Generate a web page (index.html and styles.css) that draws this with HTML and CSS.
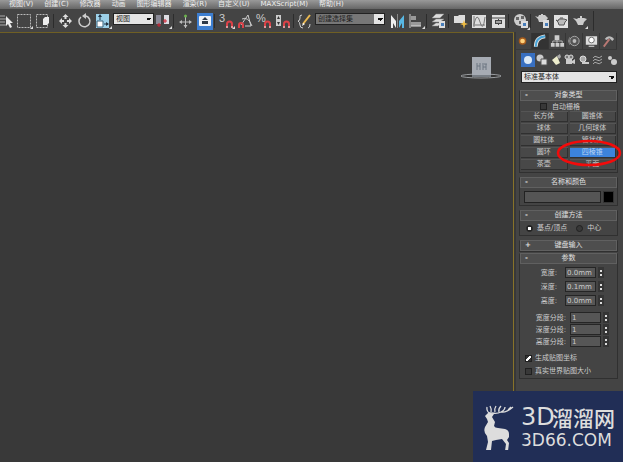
FILE: index.html
```html
<!DOCTYPE html>
<html lang="zh-CN">
<head>
<meta charset="utf-8">
<title>3D 建模</title>
<link rel="stylesheet" href="styles.css">
</head>
<body>
<nav class="menubar">
  <button>视图(V)</button><button>创建(C)</button><button>修改器</button><button>动画</button><button>图形编辑器</button><button>渲染(R)</button><button>自定义(U)</button><button>MAXScript(M)</button><button>帮助(H)</button>
</nav>
<div class="toolbar">
  <button class="tool first" aria-label="按名称选择"><svg viewBox="0 0 15 20"><path d="M0 5h5M0 8h6M0 11h5M0 14h6" stroke="#aaa"/><path d="M6 5v10l2-2 2 4 2-1-2-4h3z" fill="#eee"/></svg></button>
  <button class="tool" aria-label="矩形选择"><svg viewBox="0 0 19 20"><rect x="2.500" y="3.500" width="13" height="13" fill="none" stroke="#bbb" stroke-dasharray="2 1"/><path d="M18 15v3h-3z" fill="#ddd"/></svg></button>
  <button class="tool" aria-label="窗口选择"><svg viewBox="0 0 19 20"><rect x="2.500" y="3.500" width="11" height="13" fill="none" stroke="#bbb" stroke-dasharray="2 1"/><path d="M9 8l2-2h4v6l-2 2H9z" fill="#eee"/></svg></button>
  <span class="sep"></span>
  <button class="tool" aria-label="移动"><svg viewBox="0 0 19 20"><path d="M9.500 5v3M9.500 12v3M4 10h4M11 10h4" stroke="#ddd" stroke-width="2"/><path d="M9.500 3l3 3h-6zM9.500 17l3-3h-6zM3 10l3-3v6zM16 10l-3-3v6z" fill="#ddd"/></svg></button>
  <button class="tool" aria-label="旋转"><svg viewBox="0 0 19 20"><path d="M6 6a5.500 5.500 0 1 0 5-1" fill="none" stroke="#ccc" stroke-width="1.500"/><path d="M11 2v6L7 5z" fill="#ccc"/></svg></button>
  <button class="tool" aria-label="缩放"><svg viewBox="0 0 19 20"><path d="M2 3h13v14H2z" fill="#9cd0e8"/><path d="M3 10h6v6H3z" fill="#fff" stroke="#38607a"/><path d="M6 9V5M10 13h4" stroke="#234"/><path d="M6 3l2 3H4zM15 13l-3-2v4z" fill="#234"/><path d="M18 15v3h-3z" fill="#ddd"/></svg></button>
  <select class="combo coord" aria-label="参考坐标系"><option>视图</option></select>
  <button class="tool" aria-label="轴点中心"><svg viewBox="0 0 19 20"><path d="M2 4h5v9H2z" fill="#898996"/><path d="M10 4h5v9h-5z" fill="#dcdce2"/><path d="M3 14h4M5 12v4M9 10h4M11 8v4" stroke="#d02535"/><path d="M18 15v3h-3z" fill="#ddd"/></svg></button>
  <span class="sep"></span>
  <button class="tool" aria-label="操纵"><svg viewBox="0 0 19 20"><path d="M9.500 5v12M4 11h11" stroke="#bbb"/><path d="M3 11l3-2v4zM16 11l-3-2v4zM9.500 17l2-3h-4z" fill="#bbb"/><circle cx="9.500" cy="5" r="1.500" fill="#6db34e"/></svg></button>
  <button class="tool" aria-label="快捷键覆盖" aria-pressed="true"><svg viewBox="0 0 19 20"><path d="M2 2h16v17H2z" fill="#3d7ed0"/><rect x="4" y="5" width="12" height="10" rx="1" fill="#f0f3f7"/><path d="M10 6l3 3H7zM7 10h6v3H7z" fill="#2e3a49"/></svg></button>
  <span class="sep"></span>
  <button class="tool" aria-label="捕捉"><svg viewBox="0 0 19 20"><text x="2" y="11" class="glyph">3</text><path d="M10 17v-4a2.500 2.500 0 0 1 5 0v4" class="magnet"/><path d="M9 16h2M14 16h2" stroke="#eee"/><path d="M18 15v3h-3z" fill="#ddd"/></svg></button>
  <button class="tool" aria-label="角度捕捉"><svg viewBox="0 0 19 20"><path d="M5 14L12 4l3 11H9M6 8q6-3 10 7" fill="none" stroke="#ccc"/><path d="M3 17v-3a2 2 0 0 1 4 0v3" class="magnet"/></svg></button>
  <button class="tool" aria-label="百分比捕捉"><svg viewBox="0 0 19 20"><text x="1" y="11" class="glyph">%</text><path d="M10 17v-4a2.500 2.500 0 0 1 5 0v4" class="magnet"/><path d="M9 16h2M14 16h2" stroke="#eee"/></svg></button>
  <button class="tool" aria-label="微调器捕捉"><svg viewBox="0 0 19 20"><path d="M2 4h5v11H2z" fill="#ccc"/><path d="M4.500 5L6 8H3zM4.500 14L6 11H3z" fill="#333"/><path d="M10 17v-4a2.500 2.500 0 0 1 5 0v4" class="magnet"/><path d="M9 16h2M14 16h2" stroke="#eee"/></svg></button>
  <span class="sep"></span>
  <button class="tool" aria-label="编辑选择集"><svg viewBox="0 0 19 20"><path d="M6 4q-3 0-2 3 0 3-2 3 2 1 2 4 0 3 3 3M12 17q2 0 2-4" fill="none" stroke="#ccc"/><path d="M7 13l7-9" stroke="#ebb951" stroke-width="2"/><path d="M6 15l1-3 2 1z" fill="#fff"/></svg></button>
  <select class="combo sets" aria-label="命名选择集"><option>创建选择集</option></select>
  <span class="sep plain"></span>
  <button class="tool" aria-label="镜像"><svg viewBox="0 0 19 20"><path d="M3 4l5 6v7l-3-5v5H3z" fill="#eee"/><path d="M9.500 3v14" stroke="#888"/><path d="M16 4l-5 6v7l3-5v5h2z" fill="#58b7e3"/></svg></button>
  <button class="tool" aria-label="对齐"><svg viewBox="0 0 19 20"><path d="M3 3v14" stroke="#ccc"/><path d="M4 5h5v4H4zM4 11h10v4H4z" fill="#999"/><path d="M4 15h10" stroke="#ddd"/><path d="M18 15v3h-3z" fill="#ddd"/></svg></button>
  <span class="sep"></span>
  <button class="tool" aria-label="图层"><svg viewBox="0 0 19 20"><path d="M3 7l4-4h8l-4 4zM3 11l4-3h8l-4 3zM3 15l4-3h5l-3 3z" fill="#ddd" stroke="#888" stroke-width=".5"/><path d="M10 10h6v7h-6z" fill="#ddd"/><path d="M12 12h3v3h-3z" fill="#477ebc"/></svg></button>
  <span class="sep"></span>
  <button class="tool" aria-label="功能区"><svg viewBox="0 0 19 20"><path d="M3 5h4l1-1h6v8H3z" fill="#ddd"/><path d="M13 9l1 3 3 1-3 1-1 4-1-4-3-1 3-1z" fill="#f0bd43"/></svg></button>
  <button class="tool" aria-label="曲线编辑器"><svg viewBox="0 0 19 20"><path d="M2 4h14v13H2z" fill="#dedede"/><path d="M4 5v11M3 14h12M4 13q3-13 6-2t5-5" fill="none" stroke="#777"/></svg></button>
  <button class="tool" aria-label="图解视图"><svg viewBox="0 0 19 20"><path d="M3 4h13v13H3z" fill="#dedede"/><path d="M3 7h13M9.500 8v6" stroke="#444"/><path d="M6 9h7v4H6z" fill="#444"/><path d="M7 11h5" stroke="#fff"/></svg></button>
  <span class="sep"></span>
  <button class="tool" aria-label="材质编辑器"><svg viewBox="0 0 19 20"><circle cx="9" cy="9" r="6" fill="#ccc"/><path d="M5 6h3v3H5zM10 5h3v3h-3zM8 10h3v3H8z" fill="#666"/><path d="M10 10h7v7h-7z" fill="#ddd"/><path d="M12 12h3v3h-3z" fill="#477ebc"/><path d="M19 16v3h-3z" fill="#ddd"/></svg></button>
  <span class="sep"></span>
  <button class="tool" aria-label="渲染设置"><svg viewBox="0 0 19 20"><path d="M2 5l3 1 1-2h2V3h2v1h2l3 3-3 4H6L5 8z" fill="#ccc"/><path d="M10 9h6v8h-6z" fill="#ddd"/><path d="M12 12h3v3h-3z" fill="#477ebc"/></svg></button>
  <button class="tool" aria-label="渲染帧窗口"><svg viewBox="0 0 19 20"><path d="M2 4h14v13H2z" fill="#e2e2e2"/><path d="M4 9l2 1 1-2h5l3 1-2 2-1 3H7l-1-3zM8 7h3" fill="#bbb" stroke="#555"/></svg></button>
  <button class="tool" aria-label="渲染产品"><svg viewBox="0 0 19 20"><path d="M2 7l4 1 1-1h2V5h2v2h2l3 1-3 3-1 3H7l-2-4z" fill="#ccc"/><path d="M17 15v3h-3z" fill="#ddd"/></svg></button>
  <span class="sep last"></span>
</div>
<main class="work">
  <section class="viewport" aria-label="视口">
    <svg class="cube" viewBox="0 0 44 26"><ellipse cx="21" cy="19" rx="20" ry="2" fill="#333" stroke="#9a9da0"/><path d="M12 0h19v18H12z" fill="#a6abb3"/><path d="M12 18h19v2H12z" fill="#777d84"/><path d="M17 6v7M17 9h3M20 6v7M22 7h5M23 13V8M26 7v6M23 10h3" stroke="#6d7682"/></svg>
  </section>
  <aside class="panel">
    <div class="tabs">
      <button aria-label="创建"><svg viewBox="0 0 17 16"><circle cx="8" cy="8" r="4" fill="#a75c1d"/><circle cx="8" cy="8" r="2.500" fill="#ffd17b"/></svg></button>
      <button aria-label="修改" class="on"><svg viewBox="0 0 17 16"><path d="M4 14Q4 4 14 3" fill="none" stroke="#ddd" stroke-width="4"/><path d="M4 14Q4 4 14 3" fill="none" stroke="#47a4d8" stroke-width="2"/></svg></button>
      <button aria-label="层次"><svg viewBox="0 0 17 16"><path d="M6 2h5v5H6zM2 10h4v4H2zM7 10h4v4H7zM12 10h4v4h-4z" fill="#ccc"/><path d="M8.500 7v3M4 10V8h10v2" fill="none" stroke="#bbb"/></svg></button>
      <button aria-label="运动"><svg viewBox="0 0 17 16"><circle cx="9" cy="8" r="5" fill="#555" stroke="#aaa"/><circle cx="9" cy="8" r="2" fill="#bbb"/><path d="M4 4q-3 4 0 8" fill="none" stroke="#888"/></svg></button>
      <button aria-label="显示"><svg viewBox="0 0 17 16"><path d="M3 3h12v9H3zM6 13h6v1H6z" fill="#ddd"/><circle cx="9" cy="7" r="3" fill="#fff" stroke="#666"/></svg></button>
      <button aria-label="工具"><svg viewBox="0 0 17 16"><path d="M5 6q3-5 8-2l2 2-2 2-3-3-3 2z" fill="#bbb"/><path d="M10 6l-6 8" stroke="#b97874" stroke-width="2"/></svg></button>
    </div>
    <div class="cats">
      <button aria-label="几何体" class="on"><svg viewBox="0 0 14 14"><circle cx="7" cy="7" r="4" fill="#dce9f6"/></svg></button>
      <button aria-label="图形"><svg viewBox="0 0 14 14"><circle cx="5" cy="5" r="3.500" fill="#ccc"/><path d="M6 6h6v6H6z" fill="#ddd" stroke="#555"/></svg></button>
      <button aria-label="灯光"><svg viewBox="0 0 14 14"><path d="M3 7l5-4 3 7-4 2z" fill="#eeeecd"/><path d="M8 3l3-2 1 3-2 2z" fill="#aaa"/></svg></button>
      <button aria-label="摄影机"><svg viewBox="0 0 14 14"><path d="M3 6h6v5H3zM9 8l3-2v5l-3-1z" fill="#ccc"/><circle cx="4" cy="4" r="2" fill="#777" stroke="#ddd"/><circle cx="8" cy="4" r="2" fill="#777" stroke="#ddd"/></svg></button>
      <button aria-label="辅助对象"><svg viewBox="0 0 14 14"><circle cx="6" cy="6" r="3" fill="#aaa" stroke="#ddd"/><path d="M5 9h7v2H5z" fill="#ccc"/></svg></button>
      <button aria-label="空间扭曲"><svg viewBox="0 0 14 14"><path d="M2 5q2-3 4-1t5-1M2 8q2-3 4-1t5-1M2 11q2-3 4-1t5-1" fill="none" stroke="#aaa"/></svg></button>
      <button aria-label="系统"><svg viewBox="0 0 14 14"><circle cx="5" cy="5" r="2" fill="#ccc"/><circle cx="9" cy="9" r="3" fill="#ccc"/></svg></button>
    </div>
    <select class="combo kind" aria-label="类别"><option>标准基本体</option></select>

    <section class="roll">
      <h2><i>-</i>对象类型</h2>
      <label class="auto"><input type="checkbox">自动栅格</label>
      <div class="types">
        <button>长方体</button><button>圆锥体</button>
        <button>球体</button><button>几何球体</button>
        <button>圆柱体</button><button>管状体</button>
        <button>圆环</button><button class="active">四棱锥<svg class="ring" viewBox="0 0 66 28"><ellipse cx="33" cy="14" rx="31" ry="12" fill="none" stroke="#f30b0b" stroke-width="2.500"/></svg></button>
        <button>茶壶</button><button>平面</button>
      </div>
    </section>
    <section class="roll">
      <h2><i>-</i>名称和颜色</h2>
      <div class="name"><input type="text" aria-label="名称"><button aria-label="对象颜色"></button></div>
    </section>
    <section class="roll">
      <h2><i>-</i>创建方法</h2>
      <div class="method"><label><input type="radio" name="m" checked>基点/顶点</label><label><input type="radio" name="m">中心</label></div>
    </section>
    <section class="roll closed">
      <h2><i>+</i>键盘输入</h2>
    </section>
    <section class="roll params">
      <h2><i>-</i>参数</h2>
      <div class="dims">
        <label for="w">宽度:</label><span><input id="w" type="text" value="0.0mm"><b></b></span>
        <label for="d">深度:</label><span><input id="d" type="text" value="0.1mm"><b></b></span>
        <label for="h">高度:</label><span><input id="h" type="text" value="0.0mm"><b></b></span>
      </div>
      <div class="dims segs">
        <label for="ws">宽度分段:</label><span><input id="ws" type="text" value="1"><b></b></span>
        <label for="ds">深度分段:</label><span><input id="ds" type="text" value="1"><b></b></span>
        <label for="hs">高度分段:</label><span><input id="hs" type="text" value="1"><b></b></span>
      </div>
      <label class="check"><input type="checkbox" checked>生成贴图坐标</label>
      <label class="check"><input type="checkbox">真实世界贴图大小</label>
    </section>
  </aside>
</main>
<div class="brand">
  <svg class="deer" viewBox="0 0 34 46"><path d="M3 12l4-4 5 2-2 3 3 5-1 4q1 2 4 2l7 1q4 1 4 5v3l-2 3 2 3-1 8h-3l1-7-4-5-6 1-4 1-1 9H4l2-8-1-6q-4-4-2-9l3-5-1-3z" fill="#ddd"/><path d="M9 10Q4 8 5 3M9 9Q10 5 8 2M10 9q5 1 9-1t4-5M13 8q-1-3 1-6M17 8q-1-3 2-6M19 8q5 1 12-5M26 6l3-3" fill="none" stroke="#ddd" stroke-width="1.300"/></svg>
  <div class="words"><div class="cn"><span>3D</span>溜溜网</div><div class="en">3D66.COM</div></div>
</div>
</body>
</html>
```
FILE: styles.css
```css
* { box-sizing: border-box; }
body {
  margin: 0;
  height: 100vh;
  display: flex;
  flex-direction: column;
  overflow: hidden;
  background: #444;
  color: #ccc;
  font: 7px/10px "DejaVu Sans", "Noto Sans CJK SC", sans-serif;
}
button, input, select { font: inherit; color: inherit; margin: 0; padding: 0; border: 0; background: none; border-radius: 0; }
svg { display: block; }

.menubar {
  flex: none;
  height: 9px;
  display: flex;
  align-items: flex-end;
  gap: 11px;
  padding: 0 9px 1px;
  background: linear-gradient(#999, #666);
  color: #eee;
  line-height: 8px;
}
.menubar button { flex: none; white-space: nowrap; }

.toolbar { flex: none; height: 23px; display: flex; align-items: center; background: #444; }
.tool { flex: none; width: 19px; height: 20px; }
.tool.first { width: 15px; }
.tool svg { width: 100%; height: 100%; }
.glyph { font: 11px "Liberation Sans", sans-serif; fill: #ccc; }
.magnet { fill: none; stroke: #dc4147; stroke-width: 2; }
.sep { flex: none; width: 3px; height: 14px; border-left: 1px solid #2c2c2c; }
.sep.plain { border: 0; }
.sep.last { height: 20px; margin-left: 3px; }

.combo {
  appearance: none;
  height: 12px;
  padding-left: 2px;
  border: 1px solid #222;
  color: #222;
  line-height: 10px;
  background-color: #e4e4e4;
  background-image: linear-gradient(to top right, transparent 50%, #111 50%), linear-gradient(to top left, transparent 50%, #111 50%);
  background-position: right 4px center, right 1px center;
  background-size: 3px 3px;
  background-repeat: no-repeat;
}
.coord { flex: none; width: 41px; margin-bottom: 3px; }
.sets {
  flex: none;
  width: 70px;
  margin-bottom: 3px;
  background-image: linear-gradient(to top right, transparent 50%, #111 50%), linear-gradient(to top left, transparent 50%, #111 50%), linear-gradient(#777, #777);
  background-position: right 4px center, right 1px center, left;
  background-size: 3px 3px, 3px 3px, 58px 100%;
}

.work { flex: 1; min-height: 0; display: flex; background: #444; }
.viewport {
  flex: 1;
  display: flex;
  justify-content: flex-end;
  align-items: flex-start;
  padding: 24px 9px 0;
  background: #393939;
  border-top: 1px solid #6f5f24;
  border-right: 1px solid #887329;
}
.cube { width: 44px; height: 26px; }

.panel { flex: none; width: 109px; padding: 1px 6px 0 5px; border-left: 2px solid #383838; display: flex; flex-direction: column; }
.tabs, .cats { flex: none; display: flex; }
.tabs { height: 17px; margin-left: -6px; border-bottom: 1px solid #393939; }
.tabs button { width: 17px; height: 16px; border-right: 1px solid #363636; }
.tabs .on { background: #333; }
.cats { padding: 3px 0 4px; margin-right: -4px; }
.cats button { width: 14px; height: 14px; }
.cats .on { background: #386fc0; }
.tabs svg, .cats svg { width: 100%; height: 100%; }
.kind { flex: none; width: 100%; margin-bottom: 7px; }

.roll { flex: none; margin: 0 -1px 4px -2px; border: 1px solid #303030; border-top-color: #444; padding-bottom: 2px; }
.roll h2 { position: relative; margin: -1px 0 0; height: 11px; font: inherit; text-align: center; color: #e0e0e0; background: #4e4e4e; border: 1px solid #606060; line-height: 9px; }
.roll h2 i { position: absolute; left: 4px; font-style: normal; font-weight: bold; }
input[type="checkbox"], input[type="radio"] { appearance: none; width: 7px; height: 7px; background: #383838; border: 1px solid #202020; }
input[type="radio"] { border-radius: 50%; }
input[type="radio"]:checked { background: radial-gradient(#fff 45%, #252525 50%); }
input[type="checkbox"]:checked { background: linear-gradient(135deg, #333 30%, #fff 35% 65%, #333 70%); }
.roll label { display: flex; align-items: center; }
.auto { justify-content: center; gap: 5px; height: 11px; padding-right: 17px; }
.types { display: grid; grid-template-columns: 1fr 1fr; gap: 2px; padding: 0 1px; }
.types button { position: relative; height: 10px; line-height: 9px; background: #484848; border: solid #303030; border-width: 0 1px 1px 0; box-shadow: 0 -1px #555; }
.types .active { background: #3c83dc; color: #b8d4f3; }
.ring { position: absolute; z-index: 1; left: -14px; top: -9px; width: 66px; height: 28px; }
.name { display: flex; gap: 2px; padding: 3px 3px 0 4px; }
.name input { flex: 1; min-width: 0; height: 12px; background: #555; border: 1px solid #222; }
.name button { width: 11px; height: 12px; background: #000; border: 1px solid #333; }
.method { display: flex; gap: 9px; padding: 2px 0 0 6px; }
.method label { gap: 4px; }
.roll.closed { padding: 0; margin-bottom: 1px; }
.dims { display: grid; grid-template-columns: 37px auto; justify-content: start; column-gap: 8px; row-gap: 3px; padding: 3px 0 0; }
.dims label { justify-content: flex-end; white-space: nowrap; }
.dims span { display: flex; gap: 2px; }
.dims input { width: 31px; height: 11px; padding-left: 1px; background: #565656; border: 1px solid #252525; }
.dims b { width: 6px; height: 11px; background: linear-gradient(#ddd, #ddd) center 3px / 2px 2px no-repeat, linear-gradient(#ddd, #ddd) center 7px / 2px 2px no-repeat, #353535; }
.segs { grid-template-columns: 46px auto; column-gap: 4px; row-gap: 1px; padding-top: 6px; }
.check { gap: 3px; height: 10px; margin: 6px 0 0 5px; white-space: nowrap; }
.check + .check { margin-top: 3px; }

.brand { position: fixed; z-index: 2; right: 0; bottom: 0; display: flex; align-items: center; gap: 5px; padding: 13px 8px 12px 9px; background: #212e56; color: #ddd; }
.deer { width: 34px; height: 46px; }
.words { width: 94px; white-space: nowrap; }
.cn { display: flex; align-items: center; gap: 1px; height: 26px; font: 500 21px/26px "Noto Sans CJK SC", sans-serif; }
.cn span { width: 30px; font: 24px/26px "DejaVu Sans", sans-serif; }
.en { height: 20px; font: 17px/20px "DejaVu Sans", sans-serif; }
```
